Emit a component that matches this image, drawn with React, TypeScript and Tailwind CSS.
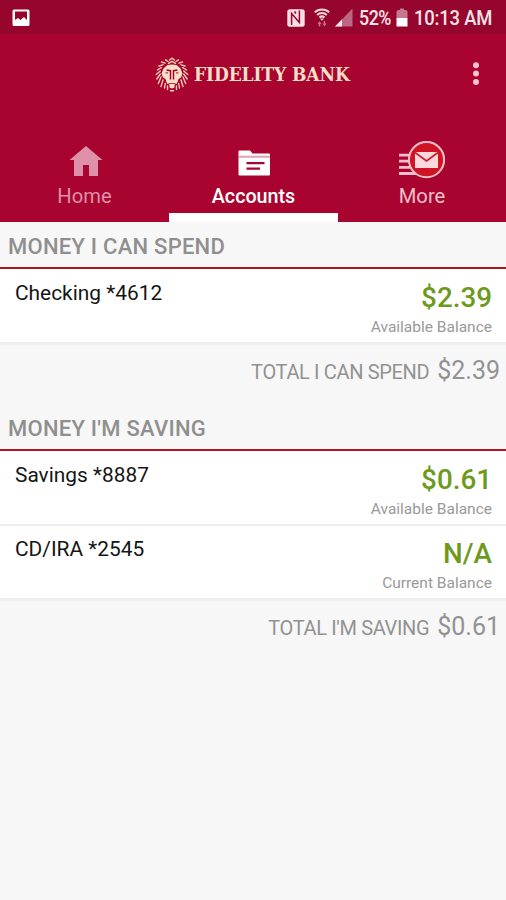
import React from "react";
import clsx from "clsx";

type Account = {
  name: string;
  amount: string;
  label: string;
};

type SectionProps = {
  title: string;
  accounts: Account[];
  totalLabel: string;
  total: string;
};

const sections: SectionProps[] = [
  {
    title: "MONEY I CAN SPEND",
    accounts: [
      { name: "Checking *4612", amount: "$2.39", label: "Available Balance" },
    ],
    totalLabel: "TOTAL I CAN SPEND",
    total: "$2.39",
  },
  {
    title: "MONEY I'M SAVING",
    accounts: [
      { name: "Savings *8887", amount: "$0.61", label: "Available Balance" },
      { name: "CD/IRA *2545", amount: "N/A", label: "Current Balance" },
    ],
    totalLabel: "TOTAL I'M SAVING",
    total: "$0.61",
  },
];

const StatusBar = () => (
  <div className="flex h-[34px] items-center bg-[#96052d] pt-px pl-3 text-[#fbe3e8]">
    <svg width="18" height="18" viewBox="0 0 18 18" className="shrink-0">
      <path
        fill="#fff"
        fillRule="evenodd"
        d="M2 .5h14A1.500 1.500 0 0 1 17.500 2v13.500a1.500 1.500 0 0 1-1.500 1.500H2a1.500 1.500 0 0 1-1.500-1.500V2A1.500 1.500 0 0 1 2 .5zM3 2.500v8.500l3-2 2.500 2L12 8l3 3V2.500z"
      />
    </svg>
    <div className="ml-auto flex items-center">
      <svg width="18" height="18" viewBox="0 0 18 18">
        <rect x="0.300" y="0.300" width="17.400" height="17.400" rx="2.500" fill="#f8dfe4" />
        <path
          d="M4.600 16V4.500l7.800 9V1.500M7.500 2.500l1.500 2"
          fill="none"
          stroke="#96052d"
          strokeWidth="1.500"
        />
      </svg>
      <svg width="16" height="19" viewBox="0 0 16 19" className="ml-[9px]">
        <g fill="none" stroke="#f4d5dc" strokeWidth="2">
          <path d="M.8 4.400C4.500.6 11.500.6 15.200 4.400" />
          <path d="M3.200 7C5.800 4.400 10.200 4.400 12.800 7" />
          <path d="M5.500 9.500c1.500-1.400 3.500-1.400 5 0" />
        </g>
        <path d="M6 10.500h4l-2 2.300z" fill="#f4d5dc" />
        <path d="M3.500 16 5.500 13l2 3h-1.200v2.500H4.700V16zM8.500 15.500h1.200V13h1.600v2.500h1.200l-2 3z" fill="#c5718b" />
      </svg>
      <svg width="18" height="19" viewBox="0 0 18 19" className="ml-[5px]">
        <path d="M0 18.500 17.500.5v18z" fill="#bd6581" />
        <path d="M0 18.500 7 11.300v7.200z" fill="#f8e4e8" />
      </svg>
      <span className="ml-[6px] w-[35px] origin-left scale-x-[0.89] text-[20px] leading-none font-medium tracking-[-0.500px] whitespace-nowrap">
        52%
      </span>
      <svg width="12" height="19" viewBox="0 0 12 19" className="ml-[2px]">
        <path d="M2.500 2h1.500V.5h4V2h1.500A2 2 0 0 1 11.500 4v6H.5V4a2 2 0 0 1 2-2z" fill="#c5788f" />
        <path d="M.5 10h11v8.500H.5z" fill="#fff" />
      </svg>
      <span className="ml-[6px] w-[92px] origin-left scale-x-[0.92] text-[20px] leading-none font-medium tracking-[-0.200px] whitespace-nowrap">
        10:13 AM
      </span>
    </div>
  </div>
);

const Lion = () => (
  <svg width="34" height="35" viewBox="0 0 34 35" className="shrink-0">
    <g fill="none" stroke="#f3cdb3" strokeWidth="1.400" strokeLinecap="round">
      <path d="M14.500 3 17 1.200 19.500 3M10.500 2.800l2.500 1.700M23.500 2.800l-2.500 1.700M6.500 5l3.500 1.200M27.500 5l-3.500 1.200M4 9l4-1.200M30 9l-4-1.200" />
      <path d="M13.500 6.300 17 4.300l3.500 2M2.300 13l4-2.300M31.700 13l-4-2.300M1.200 17.500l4-3.500M32.800 17.500 28.800 14M1.800 22l3.500-5M32.200 22l-3.500-5" />
      <path d="M3.300 26.500 6 20M30.700 26.500 28 20M6 29.500l2-6.500M28 29.500 26 23M9.500 31l.8-4.500M24.500 31l-.8-4.500M12.500 32.500V29M21.500 32.500V29M15.500 33.800h3" />
    </g>
    {/* face, with the brow and nose lines cut over it */}
    <path
      fill="#f8e0c8"
      d="M17 7.500 21.500 8l4 3.500 2 5-1.500 4-2.500 1.500-1.500 4.500-2.500 1v3l-2.500 1-2.500-1v-3l-2.500-1-1.500-4.500L8 20.500l-1.500-4 2-5L12.500 8z"
    />
    <path
      d="M11.500 13l4 .7v8.800M22.500 13l-4 .7v8.800"
      fill="none"
      stroke="#a8042f"
      strokeWidth="1.500"
    />
    <path d="M10.500 15.800H13M21 15.800h2.500M13.500 26.500h7" stroke="#b93350" strokeWidth="1.200" />
  </svg>
);

const HomeIcon = () => (
  <svg width="34" height="32" viewBox="0 0 34 32" className="relative top-px left-px">
    <path
      d="M17 1 33.500 15H29v16H20V20h-6v11H5V15H.5z"
      fill="#dd90a7"
    />
  </svg>
);

const FolderIcon = () => (
  <svg width="34" height="32" viewBox="0 0 34 32" className="relative top-px left-px">
    <path d="M.5 6.500a1 1 0 0 1 1-1H12l2.500 3H31a1 1 0 0 1 1 1V12H.5z" fill="#fff" />
    <path d="M.5 10.700H32v2H.5z" fill="#e0a0b2" />
    <path
      fillRule="evenodd"
      d="M.5 12.500H32v17a1 1 0 0 1-1 1H1.500a1 1 0 0 1-1-1zM8.500 17v2.200h18V17zM8.500 22.500v2.200h13.500v-2.200z"
      fill="#fff"
    />
  </svg>
);

const MailIcon = () => (
  <svg width="46" height="38" viewBox="0 0 46 38">
    <path
      d="M0 14.200h13M0 20.200h13M0 26.400h14M0 32.500h19"
      stroke="#f6bfcb"
      strokeWidth="2.800"
    />
    <circle cx="27.500" cy="18.700" r="17.600" fill="#cf1426" stroke="#f6bfcb" strokeWidth="2" />
    <path d="M16 11h23v16H16z" fill="#fbd9dd" />
    <path d="M16 11.500l11.500 8.500L39 11.500" fill="none" stroke="#cf1c30" strokeWidth="1.800" />
  </svg>
);

const tabs = [
  { name: "Home", icon: <HomeIcon />, color: "text-[#dd90a7]" },
  { name: "Accounts", icon: <FolderIcon />, color: "text-white" },
  { name: "More", icon: <MailIcon />, color: "text-[#f3c0cd]" },
];

const Header = () => (
  <header className="flex h-[188px] flex-col bg-[#a8042f]">
    <div className="flex h-[80px] items-center pr-[26px] pl-[155px]">
      <Lion />
      <span className="ml-[5px] font-['DejaVu_Serif_Condensed','DejaVu_Serif',serif] text-[19px] leading-none font-bold tracking-[-0.100px] whitespace-nowrap text-[#f8dfc8]">
        FIDELITY BANK
      </span>
      <svg width="8" height="26" viewBox="0 0 8 26" className="ml-auto">
        <g fill="#f6c3d0">
          <circle cx="4" cy="4.200" r="3" />
          <circle cx="4" cy="12.600" r="3" />
          <circle cx="4" cy="21" r="3" />
        </g>
      </svg>
    </div>
    <nav className="grid grow grid-cols-[169px_169px_168px]">
      {tabs.map((tab) => (
        <div
          key={tab.name}
          className={clsx(
            "flex flex-col items-center border-b-[9px] pt-[26px]",
            tab.name === "Accounts" ? "border-white" : "border-transparent",
            tab.color
          )}
        >
          <div className="flex h-[40px] items-center">{tab.icon}</div>
          <span
            className={clsx(
              "mt-[4px] leading-[25px]",
              tab.name === "Accounts"
                ? "text-[19.700px] font-medium"
                : "text-[20.200px]"
            )}
          >
            {tab.name}
          </span>
        </div>
      ))}
    </nav>
  </header>
);

const AccountRow = ({ name, amount, label }: Account) => (
  <div className="flex h-[74px] justify-between border-b-2 border-[#eeeeee] pr-[14px] pl-[15px] last:h-[75px] last:border-b-[3px]">
    <span className="pt-[11px] text-[20.900px] leading-[24px] text-[#151515]">
      {name}
    </span>
    <div className="flex flex-col items-end pt-[12px]">
      <span className="text-[27.800px] leading-[32px] font-medium text-[#6d9a1c]">
        {amount}
      </span>
      <span className="mt-[3px] text-[15.500px] leading-[20px] text-[#999999]">
        {label}
      </span>
    </div>
  </div>
);

const Section = ({ title, accounts, totalLabel, total }: SectionProps) => (
  <section>
    <h2 className="flex h-[47px] items-center border-b-2 border-[#b5141d] pt-[3px] pl-2 text-[22px] font-medium tracking-[0.250px] text-[#8f8f8f]">
      {title}
    </h2>
    <div className="bg-white pt-px">
      {accounts.map((account) => (
        <AccountRow key={account.name} {...account} />
      ))}
    </div>
    <div className="flex h-[59px] items-baseline justify-end gap-2 pt-[11px] pr-[6px] text-[#929292]">
      <span className="text-[20px] tracking-[-0.350px]">{totalLabel}</span>
      <span className="text-[25px] leading-[30px]">{total}</span>
    </div>
  </section>
);

const App = () => {
  return (
    <div className="h-[900px] w-[506px] overflow-hidden bg-[#f7f7f7] font-[Roboto,sans-serif]">
      <StatusBar />
      <Header />
      {sections.map((section) => (
        <Section key={section.title} {...section} />
      ))}
    </div>
  );
};

export default App;
